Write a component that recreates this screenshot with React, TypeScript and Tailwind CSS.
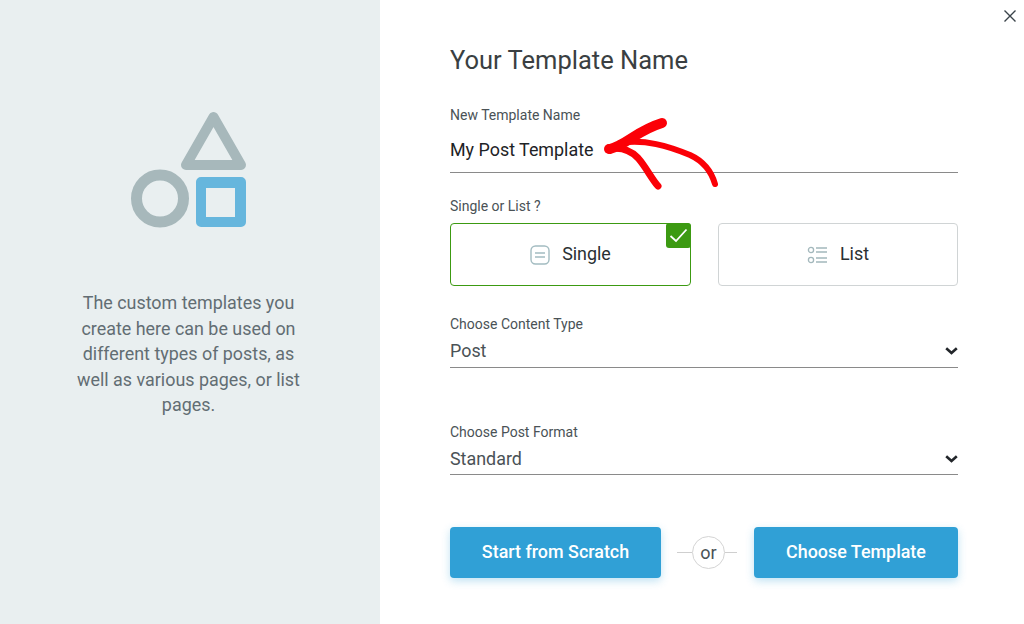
export default function App() {
  return (
    <div className="relative flex h-[624px] w-[1024px] overflow-hidden bg-white font-['Roboto',sans-serif] text-[#333b40]">
      <aside className="flex h-full w-[380px] shrink-0 flex-col items-center bg-[#e9eff0] pt-[106px]">
        <svg width="130" height="130" viewBox="125 106 130 130">
          <path d="M213.5 117 L241 165 H186 Z" fill="none" stroke="#a7b8bb" strokeWidth="10" strokeLinejoin="round" />
          <circle cx="160" cy="198.5" r="23.5" fill="none" stroke="#a7b8bb" strokeWidth="11" />
          <path fillRule="evenodd" fill="#66b6dd" d="M201 177 H241 A5 5 0 0 1 246 182 V222 A5 5 0 0 1 241 227 H201 A5 5 0 0 1 196 222 V182 A5 5 0 0 1 201 177 Z M206 188 V217 H235 V188 Z" />
        </svg>
        <p className="mr-[3px] mt-[54px] w-[240px] text-center text-[17.9px] leading-[25.6px] text-[#626d73]">
          The custom templates you create here can be used on different types of posts, as well as various pages, or list pages.
        </p>
      </aside>

      <main className="flex flex-1 flex-col pl-[70px] pr-[66px] pt-[44px]">
        <h1 className="text-[25.5px] leading-[32px] text-[#3a3f42]">Your Template Name</h1>

        <label className="mt-[31px] text-[14px] leading-[16px] text-[#4a5256]">New Template Name</label>
        <div className="mt-[15px] flex h-[35px] items-start border-b border-[#8a8a8a] text-[17.9px] leading-[24px] text-[#1e2326]">
          My Post Template
        </div>

        <label className="mt-[25px] text-[14px] leading-[16px] text-[#4a5256]">Single or List ?</label>
        <div className="mt-[9px] flex gap-[27px]">
          <button className="relative flex h-[63px] w-[241px] items-center justify-center gap-[12px] rounded-[4px] border border-[#3c9a12] text-[17.9px] text-[#2a2f32]">
            <svg width="20" height="20" viewBox="0 0 20 20" fill="none" stroke="#a3bcc1" strokeWidth="1.4">
              <rect x="1" y="1" width="18" height="18" rx="4.5" />
              <path d="M5 8h10M5 12h10" />
            </svg>
            Single
            <span className="absolute right-[-1px] top-[-1px] flex h-[25px] w-[25px] items-center justify-center rounded-[3px] bg-[#3c9a12]">
              <svg width="19" height="15" viewBox="0 0 19 15" fill="none" stroke="#ffffff" strokeWidth="1.8">
                <path d="M1.5 8 L7 13 L17.5 1.5" />
              </svg>
            </span>
          </button>
          <button className="flex h-[63px] w-[240px] items-center justify-center gap-[12px] rounded-[4px] border border-[#d0d4d5] text-[17.9px] text-[#2a2f32]">
            <svg width="21" height="18" viewBox="0 0 21 18" fill="none" stroke="#a3b8bc" strokeWidth="1.3">
              <circle cx="4" cy="4" r="2.6" />
              <circle cx="4" cy="14" r="2.6" />
              <path d="M9 2h11M9 6h11M9 12h11M9 16h11" />
            </svg>
            List
          </button>
        </div>

        <label className="mt-[30px] text-[14px] leading-[16px] text-[#4a5256]">Choose Content Type</label>
        <div className="mt-[3px] flex h-[33px] items-center justify-between border-b border-[#8a8a8a] text-[17.9px] text-[#4a5256]">
          Post
          <svg width="13" height="8" viewBox="0 0 13 8" fill="none" stroke="#22262a" strokeWidth="2.6">
            <path d="M1.2 1.2 L6.5 6 L11.8 1.2" />
          </svg>
        </div>

        <label className="mt-[56px] text-[14px] leading-[16px] text-[#4a5256]">Choose Post Format</label>
        <div className="mt-[4px] flex h-[31px] items-center justify-between border-b border-[#8a8a8a] text-[17.9px] text-[#4a5256]">
          Standard
          <svg width="13" height="8" viewBox="0 0 13 8" fill="none" stroke="#22262a" strokeWidth="2.6">
            <path d="M1.2 1.2 L6.5 6 L11.8 1.2" />
          </svg>
        </div>

        <div className="mt-[52px] flex items-center">
          <button className="h-[51px] w-[211px] rounded-[4px] bg-[#30a0d6] text-[17.9px] font-medium text-white shadow-[0_3px_8px_rgba(48,160,214,0.3)]">
            Start from Scratch
          </button>
          <div className="flex flex-1 items-center justify-center pr-[1px]">
            <span className="h-px w-[15px] bg-[#cfcfcf]" />
            <span className="flex h-[33px] w-[33px] items-center justify-center rounded-full border border-[#d4d4d4] text-[18px] leading-none text-[#4a5256]">or</span>
            <span className="h-px w-[12px] bg-[#cfcfcf]" />
          </div>
          <button className="h-[51px] w-[204px] rounded-[4px] bg-[#30a0d6] text-[17.9px] font-medium text-white shadow-[0_3px_8px_rgba(48,160,214,0.3)]">
            Choose Template
          </button>
        </div>
      </main>

      <svg width="14" height="14" viewBox="0 0 14 14" fill="none" stroke="#3a434a" strokeWidth="1.4" className="absolute left-[1003px] top-[9px]">
        <path d="M1.5 1.5 L12.5 12.5 M12.5 1.5 L1.5 12.5" />
      </svg>

      <svg width="130" height="90" viewBox="0 0 130 90" fill="none" stroke="#fb0007" strokeLinecap="round" strokeLinejoin="round" className="absolute left-[600px] top-[110px]">
        <path d="M10 39 C28 34 36 21 62 13" strokeWidth="10" />
        <path d="M10 39 C20 37 30 40 38 48 C46 57 51 68 58 76" strokeWidth="7" />
        <path d="M20 33 C45 29 68 36 90 45 C103 51 111 60 115 74" strokeWidth="6" />
        <circle cx="9" cy="39" r="5" fill="#fb0007" stroke="none" />
      </svg>
    </div>
  );
}
